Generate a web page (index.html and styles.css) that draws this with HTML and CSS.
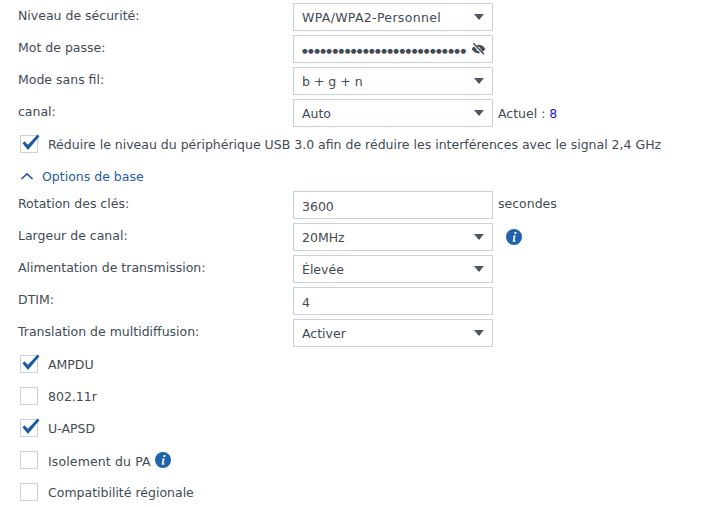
FILE: index.html
```html
<!DOCTYPE html>
<html lang="fr">
<head>
<meta charset="utf-8">
<title>Options sans fil</title>
<link rel="stylesheet" href="styles.css">
</head>
<body>
<svg class="defs" width="0" height="0" aria-hidden="true">
  <symbol id="info" viewBox="0 0 16 16">
    <circle cx="8" cy="8" r="8" fill="#1f62ad"/>
    <path d="M8.600 3.100h2l-.4 2h-2zM7.300 6.400h2.400l-1.200 5.200h1.100l-.3 1.200H6.600l1.100-5.200h-.8z" fill="#fff"/>
  </symbol>
  <symbol id="tick" viewBox="0 0 20 20">
    <path d="M2.500 10.200l2-2 3.400 3.600L17.600 1.600l1.900 1.600L8 17z" fill="#1f5c9e"/>
  </symbol>
</svg>
<main class="form">
  <div class="row">
    <span class="label">Niveau de sécurité:</span>
    <div class="field select"><span class="wider">WPA/WPA2-Personnel</span><i class="caret"></i></div>
  </div>
  <div class="row">
    <span class="label">Mot de passe:</span>
    <div class="field password">
      <span class="dots">●●●●●●●●●●●●●●●●●●●●●●●●●●●</span>
      <svg class="eye" width="15" height="14" viewBox="0 0 14 14">
        <path d="M.2 7C1.800 4.200 4.200 2.700 7 2.700s5.200 1.500 6.800 4.300c-1.600 2.800-4 4.300-6.800 4.300S1.800 9.800.2 7z" fill="#414b55"/>
        <circle cx="7" cy="7" r="2" fill="#fff"/>
        <path d="M1.800 1.700l10.700 11" stroke="#fff" stroke-width="2.800"/>
        <path d="M1.800 1.300l10.700 11" stroke="#414b55" stroke-width="1.500"/>
      </svg>
    </div>
  </div>
  <div class="row">
    <span class="label">Mode sans fil:</span>
    <div class="field select"><span>b + g + n</span><i class="caret"></i></div>
  </div>
  <div class="row">
    <span class="label">canal:</span>
    <div class="field select"><span>Auto</span><i class="caret"></i></div>
    <span class="after">Actuel : <b class="current">8</b></span>
  </div>
  <label class="check wide"><span class="box on"><svg class="tick"><use href="#tick"/></svg></span>Réduire le niveau du périphérique USB 3.0 afin de réduire les interférences avec le signal 2,4 GHz</label>
  <div class="section">
    <svg class="chevron" width="14" height="8" viewBox="0 0 14 8"><path d="M1.500 7L7 1.800 12.500 7" fill="none" stroke="#1f5c9e" stroke-width="1.700"/></svg>
    <span>Options de base</span>
  </div>
  <div class="row">
    <span class="label">Rotation des clés:</span>
    <div class="field text"><span>3600</span></div>
    <span class="after up">secondes</span>
  </div>
  <div class="row">
    <span class="label">Largeur de canal:</span>
    <div class="field select"><span>20MHz</span><i class="caret"></i></div>
    <svg class="info big"><use href="#info"/></svg>
  </div>
  <div class="row">
    <span class="label">Alimentation de transmission:</span>
    <div class="field select"><span>Élevée</span><i class="caret"></i></div>
  </div>
  <div class="row">
    <span class="label">DTIM:</span>
    <div class="field text"><span>4</span></div>
  </div>
  <div class="row">
    <span class="label">Translation de multidiffusion:</span>
    <div class="field select"><span>Activer</span><i class="caret"></i></div>
  </div>
  <div class="checks">
    <label class="check"><span class="box on"><svg class="tick"><use href="#tick"/></svg></span>AMPDU</label>
    <label class="check"><span class="box"></span>802.11r</label>
    <label class="check"><span class="box on"><svg class="tick"><use href="#tick"/></svg></span>U-APSD</label>
    <label class="check iso"><span class="box"></span><span class="iso-text">Isolement du PA</span><svg class="info"><use href="#info"/></svg></label>
    <label class="check"><span class="box"></span>Compatibilité régionale</label>
  </div>
</main>
</body>
</html>
```

FILE: styles.css
```css
html, body {
  margin: 0;
  padding: 0;
  background: #fff;
}
body {
  width: 708px;
  height: 507px;
  overflow: hidden;
  font-family: "DejaVu Sans", sans-serif;
  font-size: 12.500px;
  color: #414b55;
}
.defs {
  position: absolute;
}
.form {
  display: flex;
  flex-direction: column;
  padding: 3px 0 0 18px;
}
.row {
  display: flex;
  align-items: center;
  height: 28px;
  margin-bottom: 4px;
}
.label {
  width: 275px;
  flex: none;
  position: relative;
  top: -2px;
}
.field {
  box-sizing: border-box;
  width: 200px;
  height: 28px;
  flex: none;
  display: flex;
  align-items: center;
  justify-content: space-between;
  padding: 0 8px;
  border: 1px solid #c8d2de;
  background: #fff;
}
.field.text {
  padding-top: 2px;
}
.wider {
  letter-spacing: 0.330px;
}
.caret {
  width: 0;
  height: 0;
  border-left: 5px solid transparent;
  border-right: 5px solid transparent;
  border-top: 6px solid #4a5562;
}
.dots {
  white-space: nowrap;
  padding-top: 4px;
  font-size: 6.500px;
  letter-spacing: 0.420px;
  color: #414b55;
}
.eye {
  flex: none;
  margin-right: -2px;
}
.after {
  margin-left: 5px;
}
.after.up {
  position: relative;
  top: -2px;
}
.current {
  font-weight: normal;
  color: #1a1ae0;
}
.info {
  width: 16px;
  height: 16px;
  flex: none;
  margin-left: 4px;
}
.info.big {
  margin-left: 13px;
}
.check {
  display: flex;
  align-items: center;
  height: 32px;
}
.check.wide {
  margin-top: -3px;
}
.iso-text {
  padding-top: 2px;
  letter-spacing: 0.130px;
}
.box {
  box-sizing: border-box;
  position: relative;
  width: 18px;
  height: 18px;
  margin: 0 10px 0 2px;
  flex: none;
  border: 1px solid #c8d2de;
  background: #fff;
}
.tick {
  position: absolute;
  left: -1px;
  top: -3px;
  width: 20px;
  height: 20px;
}
.section {
  display: flex;
  align-items: center;
  gap: 8px;
  height: 20px;
  padding-left: 2px;
  margin: 6px 0 5px;
  color: #1f5c9e;
}
.checks {
  display: flex;
  flex-direction: column;
  margin-top: -3px;
}
```
